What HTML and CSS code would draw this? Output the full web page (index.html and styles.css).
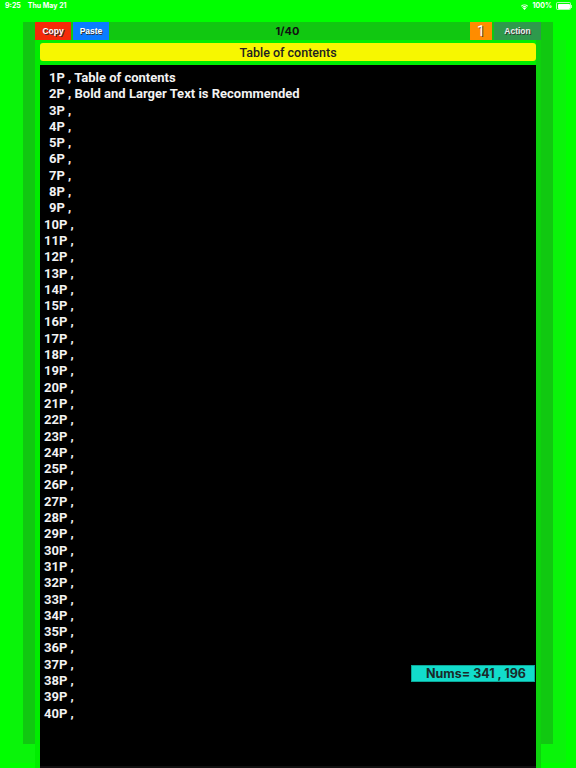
FILE: index.html
```html
<!DOCTYPE html>
<html>
<head>
<meta charset="utf-8">
<link rel="stylesheet" href="styles.css">
</head>
<body>
<div class="status">
  <div class="st-left"><span>9:25</span><span class="date">Thu May 21</span></div>
  <div class="st-right">
    <svg class="wifi" width="9" height="7" viewBox="0 0 16 12"><path d="M8 12 L5.2 9 A4 4 0 0 1 10.8 9 Z M3.6 7.3 A6.5 6.5 0 0 1 12.4 7.3 L11.3 8.4 A5 5 0 0 0 4.7 8.4 Z M1.5 5.1 A9.5 9.5 0 0 1 14.5 5.1 L13.4 6.2 A8 8 0 0 0 2.6 6.2 Z" fill="#fff"/></svg>
    <span>100%</span>
    <span class="battery"><span class="bat-fill"></span></span><span class="bat-tip"></span>
  </div>
</div>
<div class="panel">
  <div class="frame">
    <div class="topbar">
      <div class="btn copy">Copy</div>
      <div class="btn paste">Paste</div>
      <div class="pager">1/40</div>
      <div class="count">1</div>
      <div class="btn action">Action</div>
    </div>
    <div class="column">
      <div class="title">Table of contents</div>
      <div class="sheet">
        <ul class="list">
          <li class="one">1P , Table of contents</li>
          <li class="one">2P , Bold and Larger Text is Recommended</li>
          <li class="one">3P ,</li>
          <li class="one">4P ,</li>
          <li class="one">5P ,</li>
          <li class="one">6P ,</li>
          <li class="one">7P ,</li>
          <li class="one">8P ,</li>
          <li class="one">9P ,</li>
          <li>10P ,</li>
          <li>11P ,</li>
          <li>12P ,</li>
          <li>13P ,</li>
          <li>14P ,</li>
          <li>15P ,</li>
          <li>16P ,</li>
          <li>17P ,</li>
          <li>18P ,</li>
          <li>19P ,</li>
          <li>20P ,</li>
          <li>21P ,</li>
          <li>22P ,</li>
          <li>23P ,</li>
          <li>24P ,</li>
          <li>25P ,</li>
          <li>26P ,</li>
          <li>27P ,</li>
          <li>28P ,</li>
          <li>29P ,</li>
          <li>30P ,</li>
          <li>31P ,</li>
          <li>32P ,</li>
          <li>33P ,</li>
          <li>34P ,</li>
          <li>35P ,</li>
          <li>36P ,</li>
          <li>37P ,</li>
          <li>38P ,</li>
          <li>39P ,</li>
          <li>40P ,</li>
        </ul>
        <div class="nums">Nums= 341 , 196</div>
      </div>
    </div>
  </div>
</div>
</body>
</html>
```
FILE: styles.css
```css
html, body {
  margin: 0;
  padding: 0;
}
body {
  width: 576px;
  height: 768px;
  overflow: hidden;
  background: #00ff00;
  font-family: Roboto, "Liberation Sans", sans-serif;
}
.status {
  height: 22px;
  display: flex;
  justify-content: space-between;
  align-items: flex-start;
  padding: 2px 4px 0 5px;
  box-sizing: border-box;
  color: #fff;
  font-family: Inter, sans-serif;
  font-size: 7px;
  font-weight: 700;
  line-height: 8px;
}
.st-left .date {
  margin-left: 7px;
}
.st-right {
  display: flex;
  align-items: center;
  gap: 2px;
}
.wifi {
  margin-right: 1px;
}
.battery {
  display: inline-block;
  width: 12px;
  height: 5px;
  border: 1px solid rgba(255,255,255,0.7);
  border-radius: 1.5px;
  padding: 0.5px;
  box-sizing: content-box;
  margin-left: 2px;
}
.bat-fill {
  display: block;
  width: 100%;
  height: 100%;
  background: #fff;
  border-radius: 1px;
}
.bat-tip {
  display: inline-block;
  width: 1px;
  height: 3px;
  background: rgba(255,255,255,0.7);
  margin-left: -2px;
}
.panel {
  margin: 18px 10px 0 10px;
  height: 723px;
  background: #0af40a;
}
.frame {
  position: relative;
  top: -18px;
  margin: 0 13px;
  height: 722px;
  background: #11c811;
}
.topbar {
  height: 18px;
  display: flex;
  align-items: stretch;
  padding: 0 12px;
}
.btn {
  display: flex;
  align-items: center;
  justify-content: center;
  font-family: "Liberation Sans", sans-serif;
  font-size: 8.5px;
  font-weight: 700;
  color: #fff;
  text-shadow: 1px 1px 0 #333;
}
.copy {
  width: 36px;
  background: #f52a08;
}
.paste {
  width: 36px;
  margin-left: 2px;
  background: #0a7cff;
}
.pager {
  flex: 1;
  display: flex;
  align-items: center;
  justify-content: center;
  font-family: Inter, sans-serif;
  font-size: 11px;
  font-weight: 700;
  color: #111;
  padding-right: 4px;
}
.count {
  width: 22px;
  display: flex;
  align-items: center;
  justify-content: center;
  background: #ff8c00;
  color: #fff;
  font-size: 14px;
  font-weight: 400;
  text-shadow: 1px 1px 0 #444;
}
.action {
  width: 47px;
  margin-left: 2px;
  background: #2e9a4c;
  color: #eee;
}
.column {
  height: 728px;
  margin: 0 12px;
  background: #00ee00;
  border-right: 5px solid #0dd20d;
  padding: 3px 0 0 5px;
  box-sizing: border-box;
  display: flex;
  flex-direction: column;
}
.title {
  height: 18px;
  flex: none;
  background: #f7f700;
  border-radius: 3px;
  display: flex;
  align-items: center;
  justify-content: center;
  font-size: 12.5px;
  font-weight: 500;
  color: #222;
}
.sheet {
  position: relative;
  flex: 1;
  margin-top: 4px;
  background: #000;
  border-bottom: 2px solid #111;
}
.list {
  list-style: none;
  margin: 0;
  padding: 5px 0 0 4px;
  color: #f2f2f2;
  font-size: 13px;
  font-weight: 700;
  line-height: 16.3px;
}
.list .one {
  padding-left: 5px;
}
.nums {
  position: absolute;
  left: 371px;
  top: 600px;
  width: 124px;
  height: 17px;
  box-sizing: border-box;
  background: #12dccb;
  border: 1px solid #0ba898;
  display: flex;
  align-items: center;
  justify-content: center;
  padding-left: 6px;
  font-family: Inter, sans-serif;
  font-size: 12.5px;
  font-weight: 700;
  color: #1a2a2a;
}
```
